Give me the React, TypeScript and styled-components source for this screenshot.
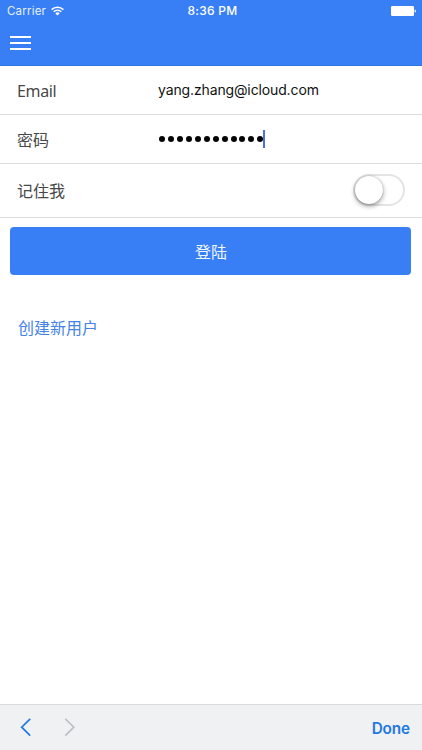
import React from "react";
import styled, { createGlobalStyle } from "styled-components";

const Global = createGlobalStyle`
  *, *::before, *::after { box-sizing: border-box; }
  body {
    margin: 0;
    background: #fff;
    font-family: Inter, "Noto Sans CJK SC", sans-serif;
  }
`;

const Screen = styled.div`
  width: 422px;
  height: 750px;
  display: flex;
  flex-direction: column;
  overflow: hidden;
  background: #fff;
`;

const Header = styled.header`
  height: 66px;
  flex: none;
  background: #387ff5;
  border-bottom: 1px solid #3475e4;
  color: #fff;
`;

const StatusBar = styled.div`
  height: 22px;
  padding: 0 6px 0 7px;
  display: grid;
  grid-template-columns: 1fr auto 1fr;
  align-items: center;
  line-height: 22px;
`;

const Carrier = styled.div`
  display: flex;
  align-items: center;
  gap: 5px;
  font-size: 11.5px;
  letter-spacing: 0.2px;
  color: #e6effe;
`;

const Clock = styled.div`
  padding-left: 2px;
  font-size: 12px;
  font-weight: 500;
  letter-spacing: 0.3px;
`;

const Battery = styled.svg`
  justify-self: end;
  display: block;
  margin-right: -1px;
`;

const MenuButton = styled.button`
  display: flex;
  flex-direction: column;
  gap: 4px;
  margin: 14px 0 0 10px;
  padding: 0;
  border: 0;
  background: none;
`;

const MenuBar = styled.span`
  width: 21px;
  height: 2px;
  background: #fff;
`;

const Form = styled.main`
  flex: 1;
`;

const Row = styled.label<{ $height: number }>`
  height: ${(p) => p.$height}px;
  display: flex;
  align-items: center;
  padding: 0 17px;
  border-bottom: 1px solid #dedede;
`;

const Label = styled.span`
  width: 141px;
  font-size: 16px;
  line-height: 24px;
  color: #484848;
`;

const EmailLabel = styled(Label)`
  font-family: "Noto Sans", sans-serif;
  letter-spacing: -0.35px;
  padding-top: 2px;
`;

const PasswordLabel = styled(Label)`
  padding-top: 2px;
`;

const Value = styled.span`
  font-size: 14px;
  line-height: 24px;
  letter-spacing: -0.13px;
  color: #111;
`;

const Password = styled.span`
  display: flex;
  align-items: center;
  gap: 2.95px;
  padding-left: 1px;
`;

const Dot = styled.i`
  width: 6px;
  height: 6px;
  border-radius: 50%;
  background: #050505;
`;

const Caret = styled.i`
  width: 2px;
  height: 18px;
  margin-left: -2.9px;
  background: #4b70dc;
`;

const Toggle = styled.span`
  width: 52px;
  height: 32px;
  margin: 0 0 1px auto;
  border: 2px solid #e4e4e4;
  border-radius: 16px;
  background: #fff;
`;

const Knob = styled.span`
  display: block;
  width: 28px;
  height: 28px;
  border-radius: 50%;
  background: #fff;
  box-shadow: 0 2px 5px rgba(0, 0, 0, 0.4), 0 0 1px rgba(0, 0, 0, 0.35);
`;

const LoginButton = styled.button`
  display: block;
  width: 401px;
  height: 48px;
  margin: 9px 0 0 10.4px;
  padding: 0 0 1px;
  border: 0;
  border-radius: 4px;
  background: #387ff5;
  color: #f0f6ff;
  font: 16px/24px "Noto Sans CJK SC", sans-serif;
`;

const SignupLink = styled.a`
  display: inline-block;
  margin: 40px 0 0 18px;
  color: #4583e6;
  font: 16px/24px "Noto Sans CJK SC", sans-serif;
`;

const Accessory = styled.footer`
  height: 46px;
  flex: none;
  display: flex;
  align-items: center;
  padding: 0 12px 0 20px;
  border-top: 1px solid #d8dadc;
  background: #eff1f3;
`;

const Done = styled.button`
  margin-left: auto;
  padding: 2px 0 0;
  border: 0;
  background: none;
  color: #2279e0;
  font: 600 15.3px/24px Inter, sans-serif;
  letter-spacing: -0.1px;
`;

const Arrows = styled.svg`
  display: block;
`;

export default function App() {
  return (
    <Screen>
      <Global />
      <Header>
        <StatusBar>
          <Carrier>
            Carrier
            <svg width="13" height="10" viewBox="0 0 13 10" fill="none" stroke="#fff" strokeWidth="1.5">
              <path d="M0.6 3.6a8.4 8.4 0 0 1 11.8 0" />
              <path d="M2.7 5.8a5.4 5.4 0 0 1 7.6 0" />
              <path d="M6.5 9.5 4.4 7.4a3 3 0 0 1 4.2 0z" fill="#fff" stroke="none" />
            </svg>
          </Carrier>
          <Clock>8:36 PM</Clock>
          <Battery width="26" height="10" viewBox="0 0 26 10">
            <rect x="0" y="0" width="23" height="10" rx="1.2" fill="#fff" />
            <path d="M23.6 3.5q1.4 0 1.4 1.5t-1.4 1.5z" fill="#fff" />
          </Battery>
        </StatusBar>
        <MenuButton aria-label="Menu">
          <MenuBar />
          <MenuBar />
          <MenuBar />
        </MenuButton>
      </Header>
      <Form>
        <Row $height={49}>
          <EmailLabel>Email</EmailLabel>
          <Value>yang.zhang@icloud.com</Value>
        </Row>
        <Row $height={49}>
          <PasswordLabel>密码</PasswordLabel>
          <Password>
            {Array.from({ length: 12 }, (_, i) => (
              <Dot key={i} />
            ))}
            <Caret />
          </Password>
        </Row>
        <Row $height={54}>
          <Label>记住我</Label>
          <Toggle>
            <Knob />
          </Toggle>
        </Row>
        <LoginButton>登陆</LoginButton>
        <SignupLink>创建新用户</SignupLink>
      </Form>
      <Accessory>
        <Arrows width="56" height="20" viewBox="0 0 56 20" fill="none" strokeWidth="1.7">
          <path d="M10.2 0.8 1.7 9.2l8.5 8.5" stroke="#2279e0" />
          <path d="m45.3 0.8 8.5 8.4-8.5 8.5" stroke="#bec0c3" />
        </Arrows>
        <Done>Done</Done>
      </Accessory>
    </Screen>
  );
}
